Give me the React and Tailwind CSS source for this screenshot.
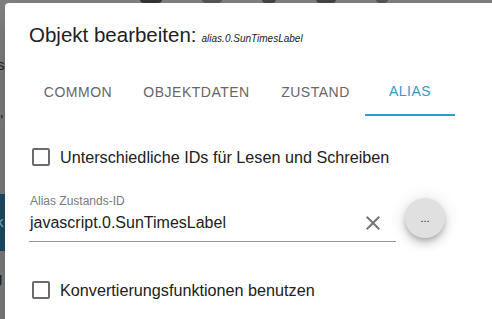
import React from "react";

function Checkbox() {
  return (
    <div className="w-[24px] h-[24px] flex items-center justify-center">
      <div className="w-[18px] h-[18px] border-2 border-[#6b6b6b] rounded-[2px]" />
    </div>
  );
}

export default function App() {
  const font = { fontFamily: '"Liberation Sans", Arial, sans-serif' };
  return (
    <div
      className="relative w-[492px] h-[319px] overflow-hidden bg-[#7f7f7f]"
      style={font}
    >
      {/* background page behind the overlay */}
      <div className="absolute left-0 top-0 w-[492px] h-[3px] flex gap-[40px] pl-[140px]">
        <div className="w-[22px] h-[8px] -mt-[5px] rounded-full bg-[#333]" />
        <div className="w-[20px] h-[8px] -mt-[5px] rounded-full bg-[#555]" />
        <div className="w-[14px] h-[8px] -mt-[5px] rounded-full bg-[#444]" />
        <div className="w-[20px] h-[8px] -mt-[5px] rounded-full bg-[#444]" />
        <div className="w-[12px] h-[8px] -mt-[5px] rounded-full bg-[#555]" />
      </div>
      <div className="absolute left-0 top-0 w-[8px] h-[319px] flex flex-col text-[15px] text-[#222]">
        <div className="h-[56px]" />
        <div className="-ml-[8px] leading-[18px]">rs</div>
        <div className="h-[37px]" />
        <div className="-ml-[8px] leading-[18px]">o'</div>
        <div className="h-[39px]" />
        <div className="-ml-[6px] leading-[18px]">r</div>
        <div className="h-[8px]" />
        <div className="h-[57px] bg-[#1c4d66] text-[#8fb3c6] flex items-center">
          <span className="-ml-[4px]">k</span>
        </div>
        <div className="h-[18px]" />
        <div className="-ml-[6px] leading-[18px]">g</div>
      </div>

      {/* dialog */}
      <div className="absolute left-[5px] top-[3px] w-[520px] h-[340px] bg-white rounded-tl-[4px] shadow-[0_11px_15px_-7px_rgba(0,0,0,0.2),0_24px_38px_3px_rgba(0,0,0,0.14)]">
        <div className="pl-[24px] pt-[16px] flex flex-col">
          <div className="h-[32px] flex items-baseline leading-[32px] text-[#212121]">
            <span className="text-[20.5px]">Objekt bearbeiten:</span>
            <span className="ml-[5px] text-[10px] italic">alias.0.SunTimesLabel</span>
          </div>

          <div className="mt-[17px] h-[48px] flex text-[14px] tracking-[0.5px] uppercase">
            <div className="w-[98px] flex items-center justify-center text-[#666]">COMMON</div>
            <div className="w-[139px] flex items-center justify-center text-[#666]">OBJEKTDATEN</div>
            <div className="w-[99px] flex items-center justify-center text-[#666]">ZUSTAND</div>
            <div className="w-[90px] flex flex-col text-[#3399cc]">
              <div className="flex-1 flex items-center justify-center">ALIAS</div>
              <div className="h-[2px] bg-[#3399cc]" />
            </div>
          </div>

          <div className="mt-[29px] h-[24px] flex items-center text-[16.2px] text-[#212121]">
            <Checkbox />
            <span className="ml-[7px]">Unterschiedliche IDs für Lesen und Schreiben</span>
          </div>

          <div className="mt-[24px] flex">
            <div className="w-[367px] flex flex-col">
              <div className="h-[16px] leading-[16px] text-[12px] text-[#7a7a7a] pl-[1px]">
                Alias Zustands-ID
              </div>
              <div className="mt-[2px] flex items-center border-b border-[#949494] pb-[6px] pl-[1px]">
                <div className="flex-1 h-[24px] leading-[24px] text-[16px] text-[#212121]">
                  javascript.0.SunTimesLabel
                </div>
                <svg width="24" height="24" viewBox="0 0 24 24" className="mr-[11px]">
                  <path
                    fill="#757575"
                    d="M19 6.41 17.59 5 12 10.59 6.41 5 5 6.41 10.59 12 5 17.59 6.41 19 12 13.41 17.59 19 19 17.59 13.41 12z"
                  />
                </svg>
              </div>
            </div>
            <div className="ml-[9px] mt-[5px] w-[40px] h-[40px] rounded-full bg-[#e0e0e0] flex items-center justify-center shadow-[0_3px_5px_-1px_rgba(0,0,0,0.2),0_6px_10px_0_rgba(0,0,0,0.14),0_1px_18px_0_rgba(0,0,0,0.12)]">
              <span className="text-[11px] text-[#222] leading-none mt-[1px]">...</span>
            </div>
          </div>

          <div className="mt-[36px] h-[24px] flex items-center text-[16.2px] text-[#212121]">
            <Checkbox />
            <span className="ml-[7px]">Konvertierungsfunktionen benutzen</span>
          </div>
        </div>
      </div>
    </div>
  );
}
